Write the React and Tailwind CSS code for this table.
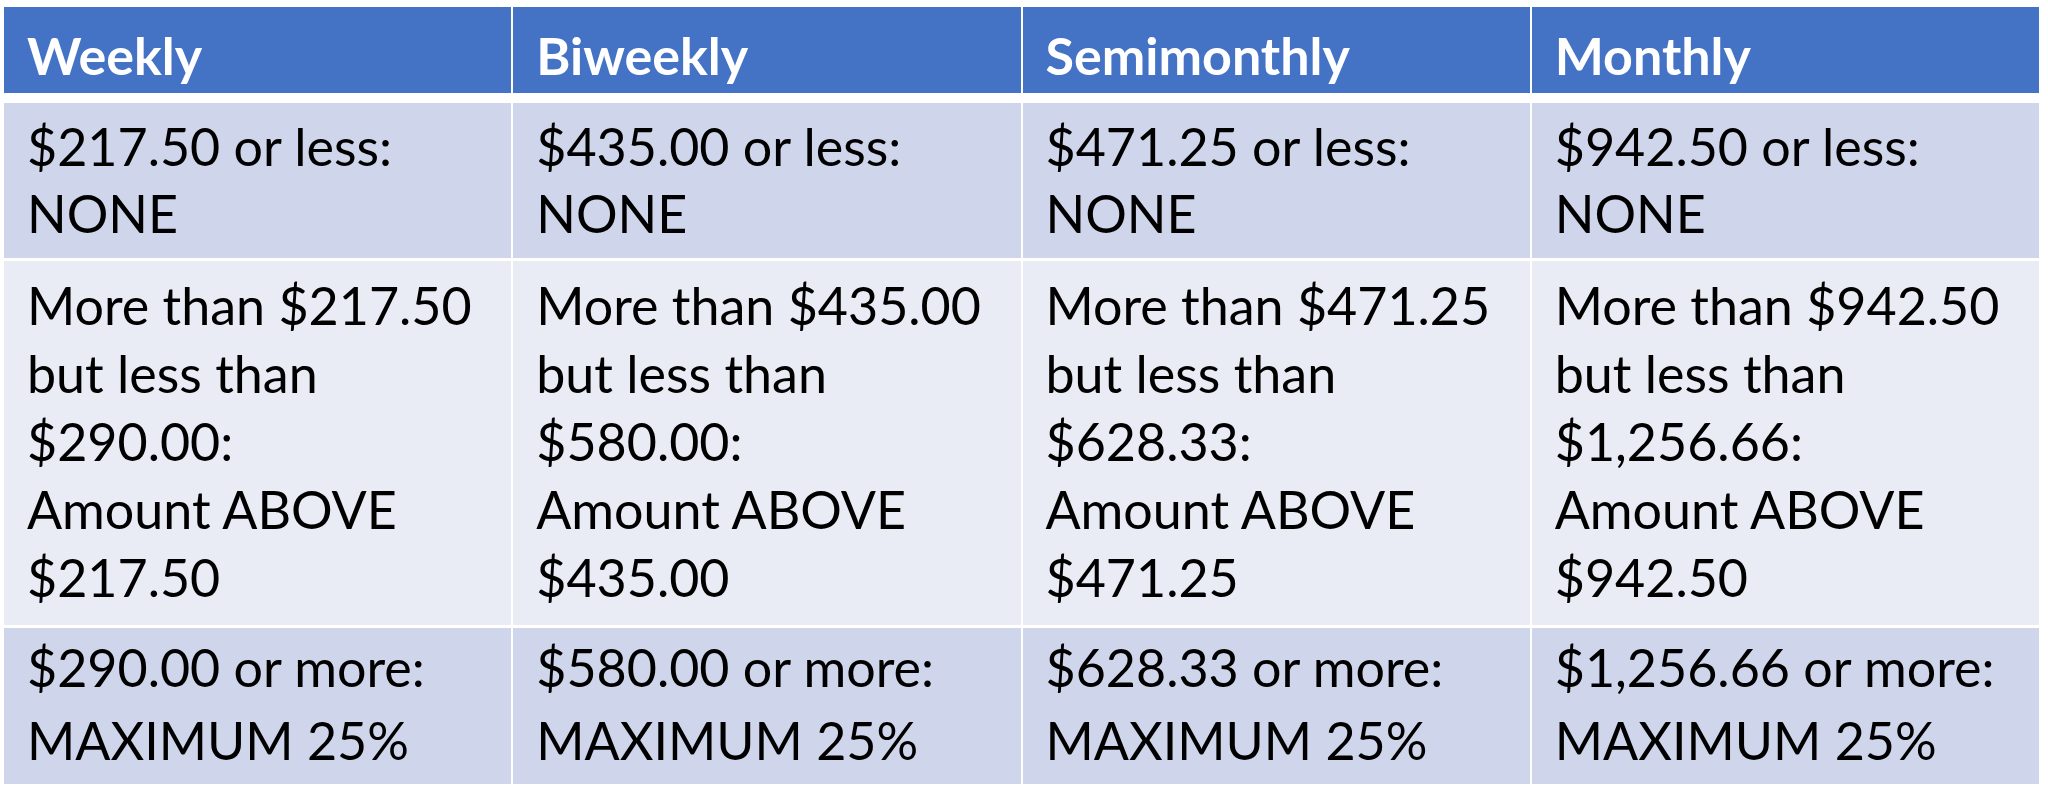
const headers = ['Weekly', 'Biweekly', 'Semimonthly', 'Monthly'];

const rows = [
  {
    cls: 'bg-[#cfd5ea] h-[155px] pt-[10px] leading-[67px]',
    cells: [
      ['$217.50 or less:', 'NONE'],
      ['$435.00 or less:', 'NONE'],
      ['$471.25 or less:', 'NONE'],
      ['$942.50 or less:', 'NONE'],
    ],
  },
  {
    cls: 'bg-[#e9ebf5] h-[364px] pt-[10px] leading-[68px]',
    cells: [
      ['More than $217.50', 'but less than', '$290.00:', 'Amount ABOVE', '$217.50'],
      ['More than $435.00', 'but less than', '$580.00:', 'Amount ABOVE', '$435.00'],
      ['More than $471.25', 'but less than', '$628.33:', 'Amount ABOVE', '$471.25'],
      ['More than $942.50', 'but less than', '$1,256.66:', 'Amount ABOVE', '$942.50'],
    ],
  },
  {
    cls: 'bg-[#cfd5ea] h-[156px] pt-[3px] leading-[73px]',
    cells: [
      ['$290.00 or more:', 'MAXIMUM 25%'],
      ['$580.00 or more:', 'MAXIMUM 25%'],
      ['$628.33 or more:', 'MAXIMUM 25%'],
      ['$1,256.66 or more:', 'MAXIMUM 25%'],
    ],
  },
];

export default function App() {
  return (
    <div
      className="w-[2048px] h-[811px] bg-white pl-[4px] pt-[7px]"
      style={{ fontFamily: 'Lato, "Open Sans", sans-serif' }}
    >
      <div className="w-[2035px] flex flex-col gap-y-[3px]">
        {/* header */}
        <div className="grid grid-cols-4 gap-x-[2px] mb-[7px]">
          {headers.map((h) => (
            <div
              key={h}
              className="h-[86px] bg-[#4472c4] text-white font-bold text-[52px] leading-[76px] pt-[10px] pl-[23px]"
            >
              {h}
            </div>
          ))}
        </div>

        {rows.map((row, i) => (
          <div key={i} className="grid grid-cols-4 gap-x-[2px]">
            {row.cells.map((lines, j) => (
              <div key={j} className={`${row.cls} pl-[23px] text-black text-[52px]`}>
                {lines.map((l, k) => (
                  <div key={k} className="whitespace-nowrap">
                    {l}
                  </div>
                ))}
              </div>
            ))}
          </div>
        ))}
      </div>
    </div>
  );
}
